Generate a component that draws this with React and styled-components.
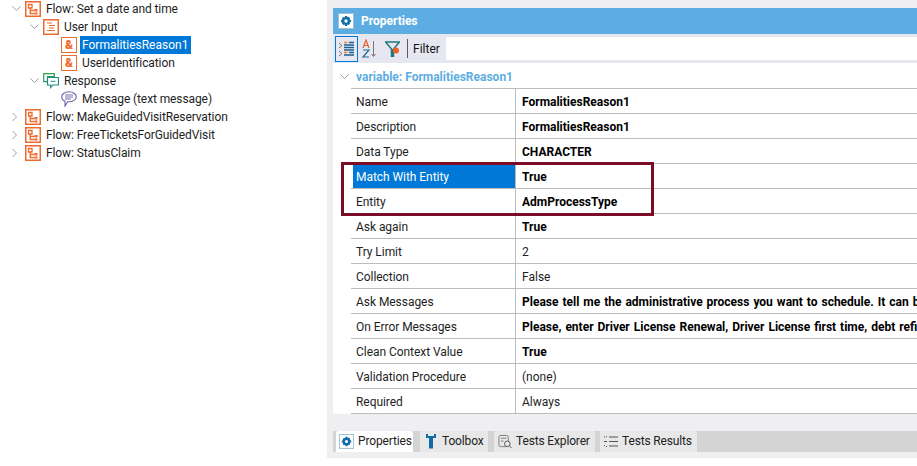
import React from "react";
import styled, { createGlobalStyle } from "styled-components";

const Global = createGlobalStyle`
  html, body { margin: 0; padding: 0; background: #fff; }
  body { width: 917px; height: 466px; overflow: hidden; font-family: Roboto, "Liberation Sans", sans-serif; }
  * { box-sizing: border-box; }
`;
const Page = styled.div`
  display: flex; width: 917px; height: 466px; font-size: 12px; color: #1e1e1e;
`;
const Tree = styled.div`
  width: 327px; flex: none; display: flex; flex-direction: column;
`;
const TreeRow = styled.div`
  display: flex; align-items: center; height: 18px; padding-left: ${p => p.$indent}px;
`;
const Chevron = styled.span`
  width: 15px; height: 14px; padding-left: 2px; display: flex; align-items: center; flex: none;
`;
const TreeLabel = styled.span`
  margin-left: 3px; padding: 1px ${p => p.$sel ? 3 : 2}px 0 2px; height: 18px; line-height: 17px; white-space: nowrap; letter-spacing: ${p => p.$sel ? 0 : -0.1}px;
  background: ${p => p.$sel ? "#0078d7" : "transparent"};
  color: ${p => p.$sel ? "#fff" : "#1e1e1e"};
`;
const VarBox = styled.span`
  width: 16px; height: 16px; flex: none; border: 1.5px solid #ee6a2e; display: flex; align-items: center; justify-content: center;
  color: #ee6a2e; font-size: 12px; font-weight: 900; line-height: 1;
`;
const Panel = styled.div`
  flex: 1; height: 458px; background: #efeff2; padding: 8px 0 6px 6px; display: flex; flex-direction: column; position: relative;
`;
const Title = styled.div`
  height: 26px; background: #5dade2; color: #fff; font-weight: 700; display: flex; align-items: center; gap: 7px; padding-left: 5px; flex: none;
`;
const Tools = styled.div`
  height: 29px; background: #e6e7f0; display: flex; align-items: center; padding: 3px 0 3px 2px; flex: none;
`;
const ToolBtn = styled.span`
  width: ${p => p.$w}px; height: 26px; flex: none; display: flex; align-items: center; justify-content: center;
  border: ${p => p.$on ? "1px solid #0078d7" : "none"};
  margin-right: ${p => p.$gap || 0}px;
`;
const Sep = styled.span`width: 1px; height: 19px; background: #5a5a6e; margin: 0 5px 0 3px; flex: none;`;
const FilterLabel = styled.span`width: 33px; flex: none; color: #111;`;
const FilterInput = styled.span`flex: 1; background: #fff; height: 23px;`;
const Content = styled.div`
  flex: 1; background: #fff; padding-top: 2px;
`;
const Group = styled.div`
  height: 23px; display: flex; align-items: center; padding-left: 7px; gap: 7px; color: #5dade2; font-weight: 700;
`;
const Grid = styled.div`
  margin-left: 18px; border-top: 1px solid #bdbdbd;
`;
const Row = styled.div`
  display: flex; height: 25px; border-bottom: 1px solid #bdbdbd;
`;
const KeyCell = styled.div`
  width: 165px; flex: none; padding-left: 2px; border-right: 1px solid #bdbdbd; display: flex;
`;
const KeyText = styled.div`
  flex: 1; padding: 1px 0 0 3px; line-height: 24px; white-space: nowrap; letter-spacing: -0.05px;
  background: ${p => p.$sel ? "#0078d7" : "transparent"};
  color: ${p => p.$sel ? "#fff" : "#1e1e1e"};
`;
const Val = styled.div`
  flex: 1; padding: 1px 0 0 6px; line-height: 24px; white-space: nowrap; overflow: hidden;
  word-spacing: ${p => p.$bold ? 1 : 0}px;
  font-weight: ${p => p.$bold ? 700 : 400}; color: ${p => p.$bold ? "#000" : "#1e1e1e"};
`;
const Tabs = styled.div`
  height: 21px; background: #d4d4d4; display: flex; padding-left: 3px; flex: none; margin-top: 17px;
`;
const Tab = styled.div`
  width: ${p => p.$w}px; margin-right: ${p => p.$gap}px; display: flex; align-items: center; gap: ${p => p.$iconGap}px; padding: 0 0 1px ${p => p.$pad}px;
  background: ${p => p.$on ? "#fff" : "#e8e8e8"}; border-radius: 2px 2px 0 0; letter-spacing: -0.15px;
  white-space: nowrap; flex: none; color: #222;
`;
const Highlight = styled.div`
  position: absolute; left: 14px; top: 162px; width: 313px; height: 54px; border: 3px solid #7a0c26; pointer-events: none;
`;

const Down = () => <svg width="9" height="6" viewBox="0 0 9 6" style={{flex:"none"}}><path d="M.5.5l4 4 4-4" fill="none" stroke="#a0a0a0"/></svg>;
const Right = () => <svg width="6" height="10" viewBox="0 0 6 10" style={{flex:"none"}}><path d="M.5 1l4 4-4 4" fill="none" stroke="#a0a0a0"/></svg>;
const Box = ({ children }) => <svg width="16" height="16" viewBox="0 0 16 16" style={{flex:"none"}}><rect x=".75" y=".75" width="14.5" height="14.5" fill="#fff" stroke="#ee6a2e" strokeWidth="1.5"/>{children}</svg>;
const FlowIcon = () => <Box><path d="M3.5 3.5h3.5v3.5h-3.5zM5.2 7v5.5H9.5M5.2 9.5H9.5" fill="none" stroke="#ee6a2e" strokeWidth="1.3"/><path d="M9.5 8h3v2.5h-3zM9.5 11.5h3v2h-3z" fill="#ee6a2e"/></Box>;
const InputIcon = () => <Box><path d="M4 4h5M6 6.5h6M6 9h5M4 11.5h8" stroke="#ee6a2e" fill="none" strokeWidth="1.2"/></Box>;
const VarIcon = () => <VarBox>&amp;</VarBox>;
const ResponseIcon = () => <svg width="16" height="16" viewBox="0 0 16 16" style={{flex:"none"}}><path d="M.7 .7h10.6v3H4.5v5H.7z" fill="#fff" stroke="#2e9e4f" strokeWidth="1.2"/><path d="M4.5 4.5h11v7.5H9.7l-2 2.500V12H4.5z" fill="#fff" stroke="#1f8a8a" strokeWidth="1.2"/><path d="M7.5 8.300h5" stroke="#1f8a8a"/></svg>;
const MsgIcon = () => <svg width="16" height="16" viewBox="0 0 16 16" style={{flex:"none"}}><path d="M8 .8c4 0 7.3 2.100 7.300 5S12 10.800 8 10.800H6.700L4 15v-4.800C2 9.500.7 8 .7 5.800.7 2.900 4 .8 8 .8z" fill="#fff" stroke="#6a5fa8" strokeWidth="1.1"/><path d="M4 4h8M4 6h8M4 8h6" stroke="#6a5fa8" strokeWidth=".9"/></svg>;
const Gear = ({ size = 16 }) => <svg width={size} height={size} viewBox="0 0 16 16" style={{flex:"none"}}><rect x=".5" y=".5" width="15" height="15" fill="#fff" stroke="#9fc0d8"/><path d="M7 3h2l.4 1.300 1.200-.6 1.500 1.500-.6 1.200L13 7v2l-1.500.4.600 1.200-1.500 1.500-1.200-.6L9 13H7l-.4-1.500-1.200.6-1.500-1.500.6-1.200L3 9V7l1.500-.4-.6-1.200 1.500-1.500 1.200.6z" fill="#0f6cab"/><circle cx="8" cy="8" r="1.700" fill="#fff"/></svg>;

const rows = [
  ["Name", "FormalitiesReason1", true],
  ["Description", "FormalitiesReason1", true],
  ["Data Type", "CHARACTER", true],
  ["Match With Entity", "True", true, true],
  ["Entity", "AdmProcessType", true],
  ["Ask again", "True", true],
  ["Try Limit", "2"],
  ["Collection", "False"],
  ["Ask Messages", "Please tell me the administrative process you want to schedule. It can be Driver License Renewal, Driver", true],
  ["On Error Messages", "Please, enter Driver License Renewal, Driver License first time, debt refinancing or another process", true],
  ["Clean Context Value", "True", true],
  ["Validation Procedure", "(none)"],
  ["Required", "Always"],
];

export default function App() {
  return (
    <Page>
      <Global />
      <Tree>
        <TreeRow $indent={10}><Chevron><Down /></Chevron><FlowIcon /><TreeLabel>Flow: Set a date and time</TreeLabel></TreeRow>
        <TreeRow $indent={28}><Chevron><Down /></Chevron><InputIcon /><TreeLabel>User Input</TreeLabel></TreeRow>
        <TreeRow $indent={61}><VarIcon /><TreeLabel $sel>FormalitiesReason1</TreeLabel></TreeRow>
        <TreeRow $indent={61}><VarIcon /><TreeLabel>UserIdentification</TreeLabel></TreeRow>
        <TreeRow $indent={28}><Chevron><Down /></Chevron><ResponseIcon /><TreeLabel>Response</TreeLabel></TreeRow>
        <TreeRow $indent={61}><MsgIcon /><TreeLabel>Message (text message)</TreeLabel></TreeRow>
        <TreeRow $indent={10}><Chevron><Right /></Chevron><FlowIcon /><TreeLabel>Flow: MakeGuidedVisitReservation</TreeLabel></TreeRow>
        <TreeRow $indent={10}><Chevron><Right /></Chevron><FlowIcon /><TreeLabel>Flow: FreeTicketsForGuidedVisit</TreeLabel></TreeRow>
        <TreeRow $indent={10}><Chevron><Right /></Chevron><FlowIcon /><TreeLabel>Flow: StatusClaim</TreeLabel></TreeRow>
      </Tree>
      <Panel>
        <Title><Gear />Properties</Title>
        <Tools>
          <ToolBtn $on $w={23} $gap={2}><svg width="18" height="18" viewBox="0 0 18 18"><path d="M1 3l3 2.500-3 2.500M1 11l3 2.500-3 2.500" fill="none" stroke="#777"/><path d="M6 2.500h3.500M6 12.500h3.500" stroke="#ee8a2e" strokeWidth="1.300"/><path d="M6 5h10M6 7.500h10M6 10h10M6 15h10M11 12.500h5M11 2.500h5" stroke="#1f5f8f" strokeWidth="1.300"/></svg></ToolBtn>
          <ToolBtn $w={19} $gap={3}><svg width="17" height="19" viewBox="0 0 17 19"><path d="M2 9l3-8 3 8M3 6.500h4" fill="none" stroke="#e8632a" strokeWidth="1.200"/><path d="M2 11h6l-6 7h6" fill="none" stroke="#1f6f9e" strokeWidth="1.200"/><path d="M12.500 2v15M10.500 15l2 2.500 2-2.500" fill="none" stroke="#777"/></svg></ToolBtn>
          <ToolBtn $w={22}><svg width="18" height="18" viewBox="0 0 18 18"><path d="M1 2h15M2 2.500l5.500 6.500v8M9.500 9v8M15 2.500L9.500 9" fill="none" stroke="#1f7a7a" strokeWidth="1.500"/><path d="M7.500 9h2v8h-2z" fill="#1f7a7a"/><circle cx="12" cy="10.500" r="3" fill="#f0632a"/></svg></ToolBtn>
          <Sep />
          <FilterLabel>Filter</FilterLabel>
          <FilterInput />
        </Tools>
        <Content>
          <Group><Down />variable: FormalitiesReason1</Group>
          <Grid>
            {rows.map(([k, v, b, s]) => (
              <Row key={k}><KeyCell><KeyText $sel={s}>{k}</KeyText></KeyCell><Val $bold={b}>{v}</Val></Row>
            ))}
          </Grid>
        </Content>
        <Tabs>
          <Tab $on $w={77} $gap={7} $pad={3} $iconGap={4}><Gear size={15} />Properties</Tab>
          <Tab $w={68} $gap={6} $pad={6} $iconGap={6}><svg width="10" height="16" viewBox="0 0 10 16"><path d="M0 1v4h3v10.500h4V5h3V1H8v2H2V1z" fill="#0f6cab"/></svg>Toolbox</Tab>
          <Tab $w={101} $gap={5} $pad={4} $iconGap={4}><svg width="14" height="15" viewBox="0 0 15 15"><rect x="1" y="1" width="10" height="12" rx="2" fill="none" stroke="#777"/><path d="M3 4h6M3 7h3" stroke="#777"/><circle cx="10" cy="10" r="3" fill="#e8e8e8" stroke="#555"/><path d="M12 12l2.500 2.500" stroke="#555"/></svg>Tests Explorer</Tab>
          <Tab $w={97} $gap={0} $pad={4} $iconGap={4}><svg width="14" height="13" viewBox="0 0 14 13"><path d="M5 2h9M5 6.500h9M5 11h9" stroke="#555"/><path d="M0 2h1M2 1l1 1M0 6.500h3M0 10.500h1M2 12l1-1" fill="none" stroke="#555"/></svg>Tests Results</Tab>
        </Tabs>
        <Highlight />
      </Panel>
    </Page>
  );
}
